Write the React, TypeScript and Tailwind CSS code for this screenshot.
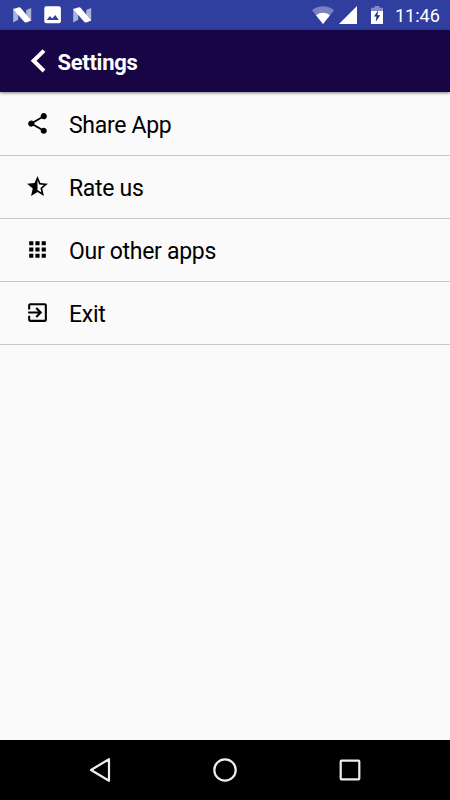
import React from 'react';
import { MdApps, MdExitToApp, MdShare, MdStarHalf } from 'react-icons/md';

interface SettingsItemProps {
    icon: React.ReactNode;
    label: string;
}

const NougatIcon = () => (
    <svg className="w-5 h-5" viewBox="0 0 20 20" fill="#fff">
        <path d="M1.2 3.6h5v11.2l-5 2.6zM14.2 5l5-2v12.8h-5z" opacity=".6" />
        <path d="M1.6 4.2L6 2.4q1.8-.6 2.8.6L19.2 15.4 15 17.3q-1.8.7-2.8-.5L1.4 4.4z" />
    </svg>
);

const PictureIcon = () => (
    <svg className="w-[18px] h-[18px]" viewBox="0 0 18 18">
        <rect x=".3" y=".3" width="16.6" height="17" rx="2" fill="#fff" />
        <path d="M2.8 14l3-4 2.5 2.5L11.3 9l3.5 5z" fill="#303f9f" />
    </svg>
);

const WifiIcon = () => (
    <svg className="w-[22px] h-[18px]" viewBox="0 0 22 18" fill="#fff">
        <path d="M11 18L0 4.3C6-1.1 16-1.1 22 4.3z" opacity=".35" />
        <path d="M11 18L4 9.2Q11 4.5 18 9.2z" />
    </svg>
);

const SignalIcon = () => (
    <svg className="w-[18px] h-[18px]" viewBox="0 0 18 18" fill="#fff">
        <path d="M18 0v18H0z" />
    </svg>
);

const BatteryIcon = () => (
    <svg className="w-3 h-[18px]" viewBox="0 0 12 18">
        <path d="M3.5 0h5v1.8H12V5H0V1.8h3.5z" fill="#fff" opacity=".4" />
        <path d="M0 5h12v13H0z" fill="#fff" />
        <path d="M7.2 4.2L3 10.6h2.5L4.7 15.8 9.2 9.2H6.4z" fill="#1d2a8c" />
    </svg>
);

const StatusBar = () => (
    <div className="h-[30px] bg-[#303f9f] flex items-center justify-between pl-3 pr-2.5 text-white">
        <div className="flex items-center">
            <NougatIcon />
            <div className="ml-3 mr-2.5"><PictureIcon /></div>
            <NougatIcon />
        </div>
        <div className="flex items-center">
            <WifiIcon />
            <div className="ml-[5px] mr-3.5"><SignalIcon /></div>
            <BatteryIcon />
            <span className="ml-3 w-[45px] text-[18px] leading-[30px] pt-0.5 whitespace-nowrap">11:46</span>
        </div>
    </div>
);

const Header = () => (
    <header className="h-[62px] bg-[#170545] flex items-center shadow-[0_1px_3px_rgba(0,0,0,0.5)] text-white">
        <svg className="ml-[30px] w-4 h-6" viewBox="0 0 16 24" fill="none" stroke="#fff" strokeWidth="4">
            <path d="M14 1.6L3.6 11.8 14 22" />
        </svg>
        <h1 className="ml-[11.5px] mt-0.5 text-[22px] tracking-[-0.3px] font-bold">Settings</h1>
    </header>
);

const SettingsItem: React.FC<SettingsItemProps> = ({ icon, label }) => (
    <button className="w-full h-[63px] flex items-center pl-[25px] border-b border-[#c8c8c8] text-left text-black">
        <span className="text-[25px] pb-px">{icon}</span>
        <span className="ml-[19px] pt-[5px] text-[23px] tracking-[-0.3px]">{label}</span>
    </button>
);

const NavigationBar = () => (
    <nav className="h-[60px] bg-black flex items-center justify-center gap-[101px]">
        <svg className="w-6 h-6" viewBox="0 0 24 24" fill="none" stroke="#eee" strokeWidth="2.2" strokeLinejoin="round">
            <path d="M21 1.2v21.6L3 12z" />
        </svg>
        <svg className="w-6 h-6" viewBox="0 0 24 24" fill="none" stroke="#eee" strokeWidth="2.2">
            <circle cx="12" cy="12" r="10.7" />
        </svg>
        <svg className="w-6 h-6" viewBox="0 0 24 24" fill="none" stroke="#eee" strokeWidth="2.2">
            <rect x="2.7" y="2.7" width="18.6" height="18.6" rx=".8" />
        </svg>
    </nav>
);

const App: React.FC = () => {
    return (
        <div className="w-[450px] h-[800px] flex flex-col bg-[#fafafa] font-['Roboto',sans-serif] overflow-hidden">
            <StatusBar />
            <Header />
            <main className="flex-1 pt-px">
                <SettingsItem icon={<MdShare />} label="Share App" />
                <SettingsItem icon={<MdStarHalf />} label="Rate us" />
                <SettingsItem icon={<MdApps />} label="Our other apps" />
                <SettingsItem icon={<MdExitToApp />} label="Exit" />
            </main>
            <NavigationBar />
        </div>
    );
};

export default App;
